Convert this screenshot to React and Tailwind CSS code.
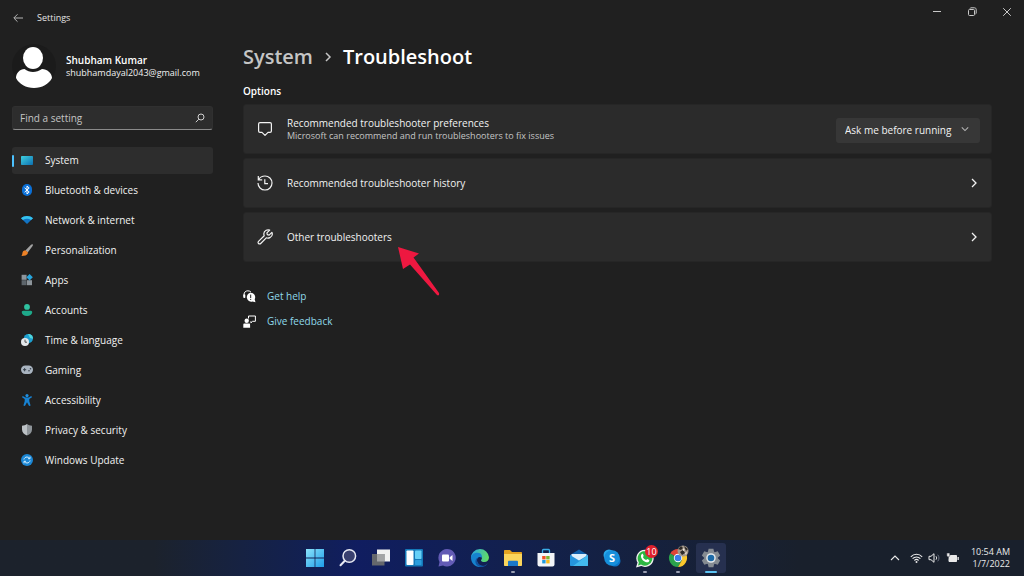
import { useState } from 'react';

const navItems = [
  { label: 'System', icon: SystemIcon },
  { label: 'Bluetooth & devices', icon: BluetoothIcon },
  { label: 'Network & internet', icon: NetworkIcon },
  { label: 'Personalization', icon: BrushIcon },
  { label: 'Apps', icon: AppsIcon },
  { label: 'Accounts', icon: AccountsIcon },
  { label: 'Time & language', icon: TimeIcon },
  { label: 'Gaming', icon: GamingIcon },
  { label: 'Accessibility', icon: AccessibilityIcon },
  { label: 'Privacy & security', icon: ShieldIcon },
  { label: 'Windows Update', icon: UpdateIcon },
];

const taskbarApps = [
  { label: 'Start', icon: StartIcon },
  { label: 'Search', icon: TaskSearchIcon },
  { label: 'Task view', icon: TaskViewIcon },
  { label: 'Widgets', icon: WidgetsIcon },
  { label: 'Chat', icon: ChatIcon },
  { label: 'Edge', icon: EdgeIcon },
  { label: 'File Explorer', icon: ExplorerIcon, running: true },
  { label: 'Microsoft Store', icon: StoreIcon },
  { label: 'Mail', icon: MailIcon },
  { label: 'Skype', icon: SkypeIcon },
  { label: 'WhatsApp', icon: WhatsAppIcon, running: true, badge: 10 },
  { label: 'Chrome', icon: ChromeIcon, running: true, profile: true },
  { label: 'Settings', icon: GearIcon, active: true },
];

/* Sidebar icons */

function SystemIcon() {
  return (
    <svg width="12" height="12" viewBox="0 0 12 12">
      <defs>
        <linearGradient id="sys" x1="0" y1="0" x2="1" y2="1">
          <stop offset="0" stopColor="#3fd0e0" />
          <stop offset="1" stopColor="#0d6fb0" />
        </linearGradient>
      </defs>
      <rect y="2" width="12" height="9" rx="0.8" fill="url(#sys)" />
    </svg>
  );
}

function BluetoothIcon() {
  return (
    <svg width="12" height="12" viewBox="0 0 12 12">
      <rect x="1" y="0" width="10" height="12" rx="5" fill="#0a6fd6" />
      <path d="M3.6 3.8 8.2 8 6 10V2L8.2 4 3.6 8.2" fill="none" stroke="#fff" strokeWidth="1" />
    </svg>
  );
}

function NetworkIcon() {
  return (
    <svg width="12" height="12" viewBox="0 0 12 12">
      <path d="M0 4.2C3.4 1.2 8.6 1.2 12 4.2L6 10Z" fill="#1274c4" />
      <path d="M0 4.2C3.4 1.2 8.6 1.2 12 4.2L10 6.1C7.6 4.2 4.4 4.2 2 6.1Z" fill="#36c3ee" />
    </svg>
  );
}

function BrushIcon() {
  return (
    <svg width="12" height="12" viewBox="0 0 12 12">
      <path d="M11.6.3c.6.5.2 1.3-.2 2L6.7 8.4 4.4 6.5 10 .8c.5-.4 1.1-.9 1.600-.5Z" fill="#a3a3a3" />
      <path d="M4.3 6.200 7 8.500C6.800 11 4.600 12 .3 11.900c1.400-1 .8-2.300 1.400-3.800.5-1.200 1.500-1.900 2.600-1.900Z" fill="#ee8226" />
    </svg>
  );
}

function AppsIcon() {
  return (
    <svg width="12" height="12" viewBox="0 0 12 12">
      <rect x="0.6" y="0.8" width="5" height="5" fill="#8d959b" />
      <rect x="0.6" y="6.2" width="5" height="5" fill="#5d656b" />
      <rect x="6" y="6.2" width="5" height="5" fill="#8d959b" />
      <path d="M8.6 0 11.8 3.2 8.6 6.4 5.4 3.2Z" fill="#27a5dc" />
    </svg>
  );
}

function AccountsIcon() {
  return (
    <svg width="12" height="12" viewBox="0 0 12 12">
      <circle cx="6" cy="2.9" r="2.9" fill="#2fc2a0" />
      <path d="M2.2 6.8H9.8c1 0 1.6.7 1.4 1.7C10.8 10.7 9 12 6 12S1.2 10.7.8 8.5C.6 7.5 1.2 6.8 2.2 6.800Z" fill="#1ea98a" />
    </svg>
  );
}

function TimeIcon() {
  return (
    <svg width="12" height="12" viewBox="0 0 12 12">
      <circle cx="7.4" cy="4.6" r="4.6" fill="#1d9fd0" />
      <path d="M7 0C10 0 12 2 12 4.8L9 4Z" fill="#4fd6dc" />
      <circle cx="4" cy="7.9" r="4" fill="#e4e7ea" />
      <path d="M4 5.600V8.200H6" fill="none" stroke="#444" strokeWidth="0.9" />
    </svg>
  );
}

function GamingIcon() {
  return (
    <svg width="12" height="12" viewBox="0 0 12 12">
      <rect y="1.5" width="12" height="8.5" rx="4.2" fill="#a9b4c0" />
      <path d="M2 5.700H5.200M3.600 4.100V7.300" stroke="#37404a" strokeWidth="1" />
      <circle cx="8" cy="6.7" r="0.8" fill="#37404a" />
      <circle cx="9.5" cy="4.7" r="0.8" fill="#37404a" />
    </svg>
  );
}

function AccessibilityIcon() {
  return (
    <svg width="12" height="12" viewBox="0 0 12 12">
      <circle cx="6" cy="1.6" r="1.6" fill="#1f8fe0" />
      <path d="M1.700 2 4.500 3.500H7.500L10.300 2 11 3.300 8.300 5.100V7.300L9.600 11.600 8.100 12 6 8.300 3.900 12 2.400 11.600 3.700 7.300V5.100L1 3.300Z" fill="#1782d2" />
    </svg>
  );
}

function ShieldIcon() {
  return (
    <svg width="12" height="12" viewBox="0 0 12 12">
      <path d="M6 0C7.500 1.100 9.200 1.600 11 1.700V5.500C11 8.600 9 10.500 6 11.600Z" fill="#8e9499" />
      <path d="M6 0C4.500 1.100 2.800 1.600 1 1.700V5.500C1 8.600 3 10.500 6 11.600Z" fill="#bcc1c5" />
    </svg>
  );
}

function UpdateIcon() {
  return (
    <svg width="12" height="12" viewBox="0 0 12 12">
      <circle cx="6" cy="6" r="6" fill="#1a86d4" />
      <path d="M2.900 5.500C3.300 3.900 4.500 3 6 3c1.100 0 2 .5 2.600 1.300M9 2.700v2H7M9.100 6.500C8.700 8.100 7.500 9 6 9c-1.100 0-2-.5-2.600-1.300M3 9.300v-2h2" fill="none" stroke="#d5efff" strokeWidth="1" />
    </svg>
  );
}

/* Line icons */

function Chevron({ size = 10, direction = 'right', strokeWidth = 1.3 }) {
  const paths = {
    right: 'M3 1 7 5 3 9',
    down: 'M1 3 5 7 9 3',
    up: 'M1 7 5 3 9 7',
  };
  return (
    <svg width={size} height={size} viewBox="0 0 10 10" fill="none" stroke="currentColor" strokeWidth={strokeWidth}>
      <path d={paths[direction]} />
    </svg>
  );
}

function PreferenceIcon() {
  return (
    <svg width="16" height="16" viewBox="0 0 16 16" fill="none" stroke="currentColor" strokeWidth="1.2" strokeLinejoin="round">
      <path d="M3 1.600H13c.8 0 1.400.6 1.400 1.400V10c0 .8-.6 1.400-1.400 1.400H11L8 14.400 5 11.400H3c-.8 0-1.400-.6-1.400-1.400V3c0-.8.6-1.400 1.400-1.400Z" />
    </svg>
  );
}

function HistoryIcon() {
  return (
    <svg width="16" height="16" viewBox="0 0 16 16" fill="none" stroke="currentColor" strokeWidth="1.2">
      <path d="M1.300 1V4.800H5.200M1.600 4.600C2.900 2.300 5.200 1 8 1c3.900 0 7 3.100 7 7s-3.100 7-7 7-7-3.100-7-7M7.800 4.200V8.600H11" />
    </svg>
  );
}

function WrenchIcon() {
  return (
    <svg width="16" height="16" viewBox="0 0 16 16" fill="none" stroke="currentColor" strokeWidth="1.2" strokeLinejoin="round">
      <path d="M12.700 1.100 9.900 3.900 10.300 5.700 12.100 6.100 14.900 3.300C15.700 5.400 14.800 7.700 12.900 8.600 11.700 9.200 10.400 9.200 9.300 8.800L3.700 14.500C3.100 15.100 2.100 15.100 1.500 14.500.9 13.900.9 12.900 1.500 12.300L7.200 6.700C6.400 4.500 7.300 2.300 9.200 1.300 10.300.7 11.600.7 12.700 1.100Z" />
    </svg>
  );
}

function HelpIcon() {
  return (
    <svg width="13" height="13" viewBox="0 0 13 13">
      <path d="M1 6.500V4.500C1 2.300 2.700.8 4.900.8c1.300 0 2.400.5 3.100 1.400" fill="none" stroke="#fff" strokeWidth="1" />
      <rect x="0.3" y="4.3" width="2" height="3.7" rx="0.8" fill="#fff" />
      <path d="M7.700 2.700a4.500 4.500 0 0 1 4 6.500l.8 3-3-.7a4.500 4.500 0 1 1-1.800-8.800Z" fill="#fff" />
      <path d="M7.700 4.600V8M7.700 8.900v1" fill="none" stroke="#202020" strokeWidth="1" />
    </svg>
  );
}

function FeedbackIcon() {
  return (
    <svg width="13" height="13" viewBox="0 0 13 13">
      <circle cx="3.7" cy="5.7" r="2.2" fill="#fff" />
      <path d="M.3 9.700c0-.7.4-1.200 1.100-1.200H6c.7 0 1.100.5 1.100 1.200V12.700H.3Z" fill="#fff" />
      <path d="M5.500 3.500V1H12.400V6.300H9.600L7.900 7.900V6.300" fill="none" stroke="#fff" strokeWidth="1" />
    </svg>
  );
}

/* Taskbar icons */

function StartIcon() {
  return (
    <svg width="20" height="20" viewBox="0 0 20 20">
      <defs>
        <linearGradient id="start" gradientUnits="userSpaceOnUse" x1="1" y1="1" x2="19" y2="19">
          <stop offset="0" stopColor="#8be3fb" />
          <stop offset="1" stopColor="#1e9ee8" />
        </linearGradient>
      </defs>
      <path d="M1 1H9.600V9.600H1ZM10.400 1H19V9.600H10.400ZM1 10.400H9.600V19H1ZM10.400 10.400H19V19H10.400Z" fill="url(#start)" />
    </svg>
  );
}

function TaskSearchIcon() {
  return (
    <svg width="20" height="20" viewBox="0 0 20 20">
      <circle cx="11.3" cy="8" r="6.3" fill="#39406f" stroke="#e6e8f2" strokeWidth="1.5" />
      <path d="M6.800 12.800 2.500 17.300" stroke="#e6e8f2" strokeWidth="2" strokeLinecap="round" />
    </svg>
  );
}

function TaskViewIcon() {
  return (
    <svg width="20" height="20" viewBox="0 0 20 20">
      <rect x="6" y="1.5" width="13" height="12" fill="#f1f1f1" />
      <rect x="1" y="6" width="12.5" height="11.5" fill="#65676c" />
      <path d="M6 6H13.500V13.500H6Z" fill="#a3a4a6" />
    </svg>
  );
}

function WidgetsIcon() {
  return (
    <svg width="20" height="20" viewBox="0 0 20 20">
      <rect x="1" y="1" width="18" height="17.5" rx="1" fill="#1478b8" />
      <rect x="2.5" y="2.5" width="7" height="14.5" rx="0.8" fill="#fff" />
      <rect x="11" y="2.5" width="6.5" height="8.5" rx="0.8" fill="#66d0f7" />
      <rect x="11" y="12" width="6.5" height="5" rx="0.8" fill="#2b9ddd" />
    </svg>
  );
}

function ChatIcon() {
  return (
    <svg width="20" height="20" viewBox="0 0 20 20">
      <path d="M10 1a8.700 8.700 0 1 1-4 16.400L1.500 18.500 2.500 14A8.700 8.700 0 0 1 10 1Z" fill="#625bb5" />
      <rect x="5" y="6.5" width="7" height="7" rx="1" fill="#fff" />
      <path d="M12.700 9.300 15.500 7V13L12.700 10.700Z" fill="#fff" />
    </svg>
  );
}

function EdgeIcon() {
  return (
    <svg width="20" height="20" viewBox="0 0 20 20">
      <defs>
        <linearGradient id="edge" x1="0" y1="0.3" x2="1" y2="0.5">
          <stop offset="0" stopColor="#2aa8e3" />
          <stop offset="1" stopColor="#62dc62" />
        </linearGradient>
      </defs>
      <path d="M10 1a9 9 0 0 1 9 8.300c0 2.900-2 4.700-4.700 4.700-2 0-3.300-.7-3.300-1.500s.9-1.100.9-2.600C11.900 7.900 9.900 6.500 7.500 6.500 4 6.500 1.300 8.700 1 11A9 9 0 0 1 10 1Z" fill="url(#edge)" />
      <path d="M1 10c0-3 3-5.200 6.400-5.200 3.200 0 5 2.200 4.400 4.700C9 8 7 9.500 7 12.200c0 3 2.500 5.300 6.300 6.200A9 9 0 0 1 1 10Z" fill="#1683ce" />
      <path d="M7.700 9.500C6.200 11.200 6.600 15.300 10 17c2.900 1.400 5.700.7 7.900-2.100C16 19 11.300 20 8 18 4.500 16 4.800 11 7.700 9.500Z" fill="#13509e" />
    </svg>
  );
}

function ExplorerIcon() {
  return (
    <svg width="20" height="20" viewBox="0 0 20 20">
      <path d="M1 3c0-.6.400-1 1-1H7L9 4H18c.6 0 1 .4 1 1V9H1Z" fill="#e5a421" />
      <path d="M1 6H19V17c0 .6-.4 1-1 1H2c-.6 0-1-.4-1-1Z" fill="#fbd55c" />
      <path d="M5 18V14c0-.7.500-1.200 1.200-1.200h7.600c.7 0 1.200.5 1.200 1.200V18Z" fill="#1c78c8" />
    </svg>
  );
}

function StoreIcon() {
  return (
    <svg width="20" height="20" viewBox="0 0 20 20">
      <path d="M6.500 6V2.500C6.500 1.900 6.900 1.500 7.500 1.500h5c.6 0 1 .4 1 1V6" fill="none" stroke="#3aaee8" strokeWidth="1.3" />
      <path d="M1.500 5H18.500V16.500c0 1.100-.9 2-2 2H3.500c-1.100 0-2-.9-2-2Z" fill="#f3f5f8" />
      <rect x="6.2" y="8" width="3.4" height="3.4" fill="#f05023" />
      <rect x="10.2" y="8" width="3.4" height="3.4" fill="#7db72f" />
      <rect x="6.2" y="12" width="3.4" height="3.4" fill="#2299dd" />
      <rect x="10.2" y="12" width="3.4" height="3.4" fill="#f6b81a" />
    </svg>
  );
}

function MailIcon() {
  return (
    <svg width="20" height="20" viewBox="0 0 20 20">
      <path d="M1 7 10 1.500 19 7V10H1Z" fill="#1160aa" />
      <path d="M2.500 6H17.500V13H2.500Z" fill="#dceffb" />
      <path d="M1 7 10 12.500 19 7V17c0 .6-.4 1-1 1H2c-.6 0-1-.4-1-1Z" fill="#2595dd" />
      <path d="M19 7 4 18H18c.6 0 1-.4 1-1Z" fill="#42b9ee" />
    </svg>
  );
}

function SkypeIcon() {
  return (
    <svg width="20" height="20" viewBox="0 0 20 20">
      <circle cx="7" cy="7" r="5.5" fill="#29a9ea" />
      <circle cx="13" cy="13" r="5.5" fill="#0b74c9" />
      <circle cx="10" cy="10" r="7.8" fill="#168fdb" />
      <text x="10" y="14" textAnchor="middle" fontSize="11" fontWeight="700" fill="#fff">S</text>
    </svg>
  );
}

function WhatsAppIcon() {
  return (
    <svg width="20" height="20" viewBox="0 0 20 20">
      <path d="M10 2.300a8 8 0 1 1-3.900 15L2 18.500 3.200 14.500A8 8 0 0 1 10 2.300Z" fill="#2cb742" stroke="#f2f2f2" strokeWidth="1.3" />
      <path d="M6.700 6.200c.5-.5 1.100-.4 1.300.1l.6 1.500c.2.500-.6 1-.6 1.400.8 1.500 1.700 2.200 3.100 2.800.4.100.9-1.100 1.400-.9l1.600.8c.5.300.2 1.300-.3 1.800-1.200 1.100-3.300.5-5-.7C6.900 11.600 4.800 8.200 6.700 6.200Z" fill="#fff" />
    </svg>
  );
}

function ChromeIcon() {
  return (
    <svg width="20" height="20" viewBox="0 0 20 20">
      <path d="M10 10 2.200 5.500A9 9 0 0 1 17.800 5.500Z" fill="#df4536" />
      <path d="M10 10 2.200 5.500A9 9 0 0 0 10 19L14 12Z" fill="#2ba24c" />
      <path d="M10 19A9 9 0 0 0 17.800 5.500H10L14 12Z" fill="#fbc82d" />
      <circle cx="10" cy="10" r="4.2" fill="#fff" />
      <circle cx="10" cy="10" r="3.3" fill="#3b7de9" />
    </svg>
  );
}

function ProfileBadge() {
  return (
    <svg width="12" height="12" viewBox="0 0 12 12">
      <circle cx="6" cy="6" r="5.5" fill="#a59a8d" />
      <path d="M1 4 4 1 6 3 4 5ZM7 1 11 4 9 6ZM3 7 6 5 8 8 5 10Z" fill="#2c2927" />
      <path d="M6 3 8 5 6 6ZM8 8 10 7 9 10Z" fill="#eee7dd" />
    </svg>
  );
}

function GearIcon() {
  const teeth = [0, 60, 120, 180, 240, 300];
  return (
    <svg width="20" height="20" viewBox="0 0 20 20">
      {teeth.map((angle) => (
        <path key={angle} d="M6.800 4 7.600.8H12.400L13.200 4Z" fill="#858b92" transform={`rotate(${angle} 10 10)`} />
      ))}
      <circle cx="10" cy="10" r="7" fill="#858b92" />
      <circle cx="10" cy="10" r="4.8" fill="#e4e8ec" />
      <circle cx="10" cy="10" r="3.3" fill="#1d6aa8" />
    </svg>
  );
}

function TitleBar() {
  return (
    <header className="flex h-9 items-center justify-between px-3 text-[#e4e4e4]">
      <div className="flex items-center gap-[13px]">
        <button aria-label="Back" className="flex h-4 w-3 items-center justify-center text-[#b5b5b5]">
          <svg width="10" height="10" viewBox="0 0 10 10" fill="none" stroke="currentColor" strokeWidth="1">
            <path d="M10 5H1M4.500 1.300.8 5 4.500 8.700" />
          </svg>
        </button>
        <span className="text-[9px]">Settings</span>
      </div>
      <div className="mb-3 flex items-center gap-[25px] text-[#c8c8c8]">
        <button aria-label="Minimize">
          <svg width="10" height="10" viewBox="0 0 10 10" stroke="currentColor"><path d="M1 4.500H9" /></svg>
        </button>
        <button aria-label="Restore">
          <svg width="10" height="10" viewBox="0 0 10 10" fill="none" stroke="currentColor">
            <rect x="1.5" y="2.5" width="6" height="6" rx="1" />
            <path d="M3 1.500C3.200 1 3.500.8 4 .8H7.500C8.500.8 9.200 1.500 9.200 2.500V6c0 .500-.2.800-.7 1" />
          </svg>
        </button>
        <button aria-label="Close">
          <svg width="10" height="10" viewBox="0 0 10 10" stroke="currentColor"><path d="M1.200 1.200 8.800 8.800M8.800 1.200 1.200 8.800" /></svg>
        </button>
      </div>
    </header>
  );
}

function Sidebar({ selected, onSelect }) {
  return (
    <aside className="mt-1 w-[201px] shrink-0">
      <div className="flex h-[52px] items-center gap-[10px]">
        <svg width="44" height="44" viewBox="0 0 44 44" className="shrink-0">
          <circle cx="22" cy="22" r="22" fill="#1b1b1b" />
          <ellipse cx="21" cy="14" rx="10" ry="11" fill="#fff" />
          <path d="M4 34C4 29 8 25 12.500 25 15 27 18 28 21 28S27 27 30 25C35 25 40 29 40 34 37 40 30 44 22 44S7 40 4 34Z" fill="#fff" />
        </svg>
        <div>
          <p className="text-[10px] leading-[14px] font-semibold text-white">Shubham Kumar</p>
          <p className="text-[9px] leading-[12px] text-[#f0f0f0]">shubhamdayal2043@gmail.com</p>
        </div>
      </div>
      <label className="mt-[14px] flex h-6 items-center rounded-[3px] border border-[#303030] border-b-[#8b8b8b] bg-[#2d2d2d] px-[7px]">
        <input type="text" aria-label="Find a setting" placeholder="Find a setting" className="min-w-0 flex-1 bg-transparent text-[10px] text-white outline-none placeholder:text-[#c4c4c4]" />
        <svg width="10" height="10" viewBox="0 0 10 10" fill="none" stroke="#d0d0d0" strokeWidth="1">
          <circle cx="6" cy="4" r="3" />
          <path d="M3.800 6.200.8 9.200" />
        </svg>
      </label>
      <nav className="mt-[17px] flex flex-col gap-[3px]">
        {navItems.map(({ label, icon: Icon }) => {
          const active = label === selected;
          return (
            <button
              key={label}
              onClick={() => onSelect(label)}
              className={`flex h-[27px] items-center rounded-[3px] text-left text-[10px] text-[#f2f2f2] ${active ? 'bg-[#2d2d2d]' : 'hover:bg-[#292929]'}`}
            >
              <span className={`mr-[7px] h-3 w-[2px] rounded-full ${active ? 'bg-[#4cc2ff]' : ''}`} />
              <span className="mb-[2px]"><Icon /></span>
              <span className="ml-3">{label}</span>
            </button>
          );
        })}
      </nav>
    </aside>
  );
}

function OptionCard({ icon: Icon, title, description, children }) {
  return (
    <section className="flex h-[50px] items-center rounded-[3px] border border-[#262626] bg-[#2b2b2b] pr-[11px] pl-[13px] text-[#f2f2f2]">
      <Icon />
      <div className="ml-[14px] flex-1">
        <h3 className="text-[10px] leading-[14px]">{title}</h3>
        {description && <p className="text-[9px] leading-[12px] text-[#c5c5c5]">{description}</p>}
      </div>
      {children}
    </section>
  );
}

function OpenButton({ label }) {
  return (
    <button aria-label={label} className="flex h-6 w-3 items-center justify-center">
      <Chevron />
    </button>
  );
}

function PointerArrow() {
  return (
    <svg width="42" height="50" viewBox="0 0 42 50" className="pointer-events-none absolute top-[35px] left-[155px]">
      <path d="M0 0 21 6.500 15.500 10.500 41 46C41.500 48 40.500 49 39 48L12 17.500 5 22Z" fill="#ee1840" />
    </svg>
  );
}

function Troubleshoot() {
  return (
    <main className="min-w-0 flex-1">
      <h1 className="mt-[6px] flex h-[30px] items-center text-[20px] font-semibold text-white">
        <a href="#system" className="text-[#c5c5c5]">System</a>
        <span className="mx-[10px] text-[#c5c5c5]"><Chevron size={10} strokeWidth={1.5} /></span>
        Troubleshoot
      </h1>
      <h2 className="mt-3 mb-[6px] text-[10px] leading-[14px] font-semibold text-white">Options</h2>
      <div className="flex flex-col gap-1">
        <OptionCard
          icon={PreferenceIcon}
          title="Recommended troubleshooter preferences"
          description="Microsoft can recommend and run troubleshooters to fix issues"
        >
          <div className="relative">
            <select aria-label="Recommended troubleshooter preferences" className="h-[25px] w-[144px] appearance-none rounded-[3px] bg-[#373737] pl-[9px] text-[10px] text-[#f2f2f2]">
              <option>Ask me before running</option>
            </select>
            <span className="pointer-events-none absolute inset-y-0 right-[11px] flex items-center text-[#b5b5b5]">
              <Chevron size={8} direction="down" />
            </span>
          </div>
        </OptionCard>
        <OptionCard icon={HistoryIcon} title="Recommended troubleshooter history">
          <OpenButton label="Open recommended troubleshooter history" />
        </OptionCard>
        <div className="relative">
          <OptionCard icon={WrenchIcon} title="Other troubleshooters">
            <OpenButton label="Open other troubleshooters" />
          </OptionCard>
          <PointerArrow />
        </div>
      </div>
      <div className="mt-[27px] flex flex-col items-start gap-[11px] text-[10px] leading-[14px] text-[#8fd9ea]">
        <a href="#help" className="flex items-center gap-[11px]"><HelpIcon />Get help</a>
        <a href="#feedback" className="flex items-center gap-[11px]"><FeedbackIcon />Give feedback</a>
      </div>
    </main>
  );
}

function Taskbar() {
  return (
    <footer className="grid h-9 grid-cols-[1fr_auto_1fr] items-center bg-linear-to-r from-[#1c222c] from-15% via-[#101d60] via-35% to-[#19202c] to-78% text-white">
      <div />
      <div className="ml-[2px] flex gap-[3px]">
        {taskbarApps.map(({ label, icon: Icon, running, active, badge, profile }) => (
          <button
            key={label}
            aria-label={label}
            className={`relative flex h-[30px] w-[30px] items-center justify-center rounded-[3px] ${active ? 'bg-[#26304f]' : ''}`}
          >
            <Icon />
            {badge && <span className="absolute top-[2px] right-[2px] flex h-[13px] w-[13px] items-center justify-center rounded-full bg-[#e0202c] text-[9px]">{badge}</span>}
            {profile && <span className="absolute top-[2px] right-[4px]"><ProfileBadge /></span>}
            {running && <span className="absolute bottom-0 h-[2px] w-1 rounded-full bg-[#9a9fb3]" />}
            {active && <span className="absolute bottom-0 h-[2px] w-3 rounded-full bg-[#5cc4f4]" />}
          </button>
        ))}
      </div>
      <div className="flex items-center justify-end pr-[14px] text-[#eaeaea]">
        <button aria-label="Show hidden icons"><Chevron direction="up" strokeWidth={1.1} /></button>
        <button aria-label="Network, volume and battery" className="ml-[10px] flex items-center gap-[5px]">
          <svg width="13" height="12" viewBox="0 0 13 12" fill="none" stroke="currentColor" strokeWidth="1.1">
            <path d="M.8 4.800C4 1.300 9 1.300 12.200 4.800M2.600 6.700c2.200-2.300 5.600-2.300 7.800 0M4.400 8.500c1.200-1.200 3-1.200 4.200 0" />
            <circle cx="6.5" cy="10" r="1" fill="currentColor" stroke="none" />
          </svg>
          <svg width="13" height="12" viewBox="0 0 13 12" fill="none" stroke="currentColor">
            <path d="M1 4.300H3L6 1.700V10.300L3 7.700H1ZM8 4.300c.8 1 .8 2.400 0 3.400" />
            <path d="M9.700 2.700c1.700 1.900 1.700 4.700 0 6.600" stroke="#6a7080" />
          </svg>
          <svg width="13" height="12" viewBox="0 0 13 12">
            <path d="M3 3.500H10.500V9.500H3Z" fill="currentColor" stroke="currentColor" strokeLinejoin="round" />
            <rect x="11.5" y="5" width="1.3" height="3" fill="currentColor" />
            <path d="M.8 1V3.200C.8 4.200 1.300 4.800 2.300 4.800S3.800 4.200 3.800 3.200V1ZM1.900 5V7" fill="currentColor" stroke="#161c28" strokeWidth="0.5" />
          </svg>
        </button>
        <div className="ml-3 text-right text-[9px] leading-[12px]">
          <p>10:54 AM</p>
          <p>1/7/2022</p>
        </div>
      </div>
    </footer>
  );
}

export default function App() {
  const [selected, setSelected] = useState('System');

  return (
    <div className="flex min-h-screen flex-col bg-[#202020] font-['Open_Sans','Noto_Sans',sans-serif]">
      <TitleBar />
      <div className="flex flex-1 gap-[30px] pr-8 pl-3">
        <Sidebar selected={selected} onSelect={setSelected} />
        <Troubleshoot />
      </div>
      <Taskbar />
    </div>
  );
}
